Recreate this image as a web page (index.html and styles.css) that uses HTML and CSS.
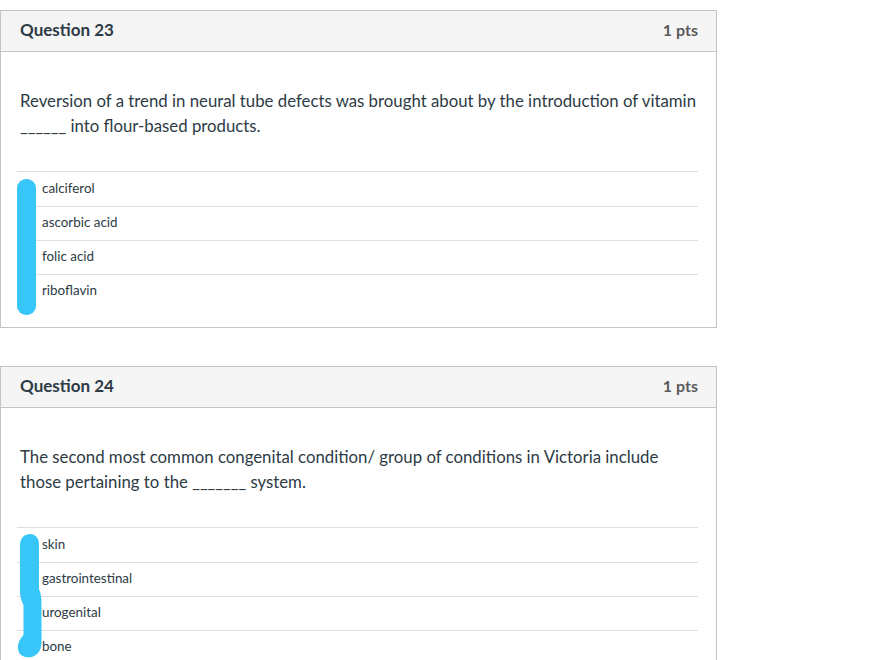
FILE: index.html
```html
<!DOCTYPE html>
<html>
<head>
<meta charset="utf-8">
<link rel="stylesheet" href="styles.css">
</head>
<body>
<div class="page">
  <div class="card">
    <div class="card-header">
      <span class="title">Question 23</span>
      <span class="pts">1 pts</span>
    </div>
    <div class="card-body">
      <p class="qtext">Reversion of a trend in neural tube defects was brought about by the introduction of vitamin ______ into flour-based products.</p>
      <ul class="answers">
        <li class="answer">calciferol</li>
        <li class="answer">ascorbic acid</li>
        <li class="answer">folic acid</li>
        <li class="answer">riboflavin</li>
      </ul>
    </div>
    <div class="mark mark-1"></div>
  </div>

  <div class="card">
    <div class="card-header">
      <span class="title">Question 24</span>
      <span class="pts">1 pts</span>
    </div>
    <div class="card-body">
      <p class="qtext">The second most common congenital condition/ group of conditions in Victoria include those pertaining to the _______ system.</p>
      <ul class="answers">
        <li class="answer">skin</li>
        <li class="answer">gastrointestinal</li>
        <li class="answer">urogenital</li>
        <li class="answer">bone</li>
      </ul>
    </div>
    <svg class="mark-2" width="50" height="320" viewBox="0 0 50 320">
      <path d="M19 178 C19 164, 38 163, 38 177 L38 222 C40.5 228, 40.5 232, 40.5 242 L40.5 276 C40.5 290, 26 294, 19 287 C14.5 280, 18 273, 22.5 268 L22.5 238 C19.5 232, 19 228, 19 222 Z" fill="#38c6f8"/>
    </svg>
  </div>
</div>
</body>
</html>
```

FILE: styles.css
```css
* { box-sizing: border-box; }
html, body { margin: 0; padding: 0; background: #ffffff; }
body {
  font-family: Lato, "Open Sans", "Liberation Sans", sans-serif;
  color: #2d3b45;
}
.page {
  padding-top: 10px;
  width: 717px;
}
.card {
  position: relative;
  border: 1px solid #c4c4c4;
  margin-bottom: 38px;
  background: #fff;
}
.card-header {
  display: flex;
  justify-content: space-between;
  align-items: center;
  height: 41px;
  padding: 0 18px 3px 19px;
  background: #f5f5f5;
  border-bottom: 1px solid #c4c4c4;
}
.title {
  font-weight: 700;
  font-size: 17px;
  color: #2d3b45;
}
.pts {
  font-weight: 700;
  font-size: 16px;
  color: #5b5b5b;
}
.card-body {
  padding: 36px 18px 19px 19px;
}
.qtext {
  margin: 0 0 33px 0;
  font-size: 16.8px;
  line-height: 25px;
}
.answers {
  list-style: none;
  margin: 0 0 0 -3px;
  padding: 0;
}
.answer {
  display: flex;
  align-items: center;
  height: 34px;
  padding: 0 0 3px 25px;
  border-top: 1px solid #dedede;
  font-size: 13.4px;
  color: #2d3b45;
}
.answer:first-child {
  height: 35px;
}
.mark {
  position: absolute;
  background: #38c6f8;
}
.mark-1 {
  left: 16px;
  top: 168px;
  width: 19px;
  height: 136px;
  border-radius: 9px;
}
.mark-2 {
  position: absolute;
  left: 0;
  top: 0;
  overflow: visible;
}
```
